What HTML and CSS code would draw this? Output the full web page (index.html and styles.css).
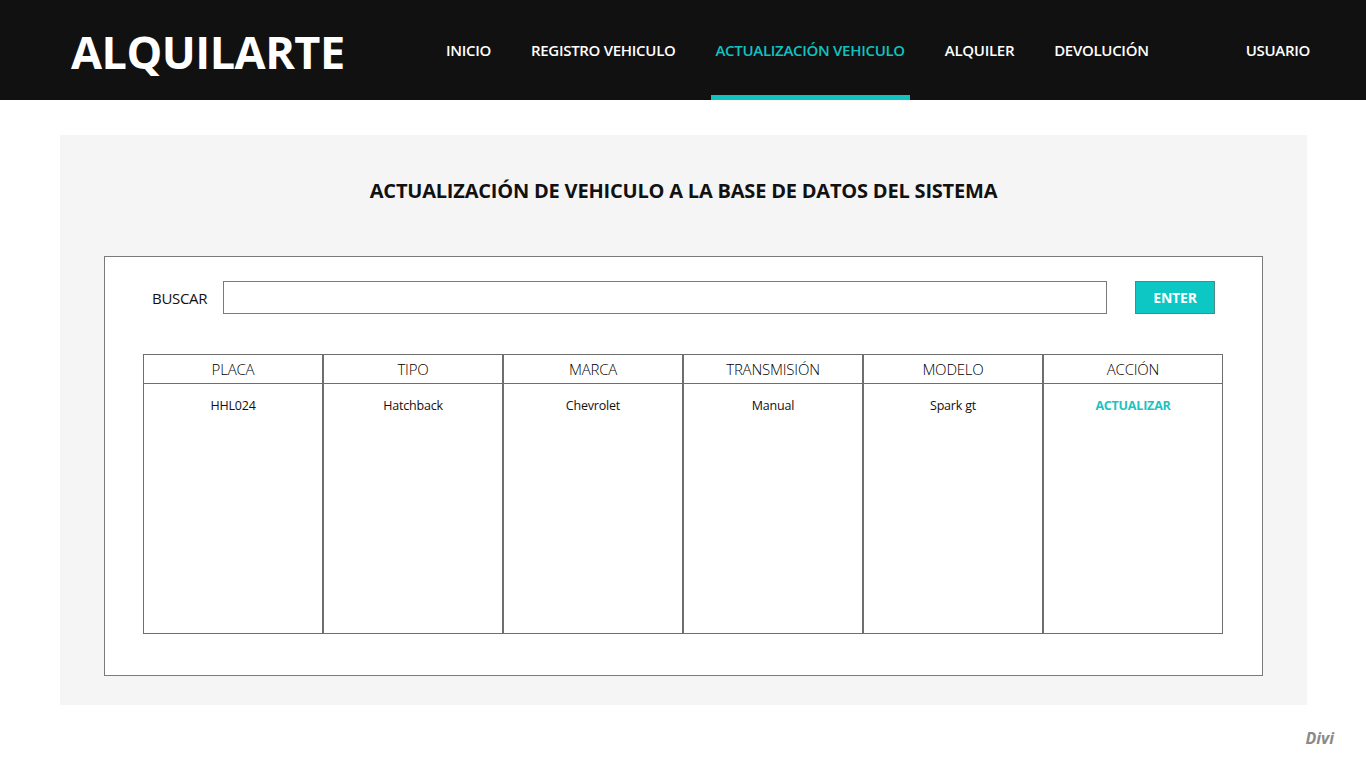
FILE: index.html
```html
<!DOCTYPE html>
<html lang="es">
<head>
<meta charset="utf-8">
<title>Alquilarte</title>
<link rel="stylesheet" href="styles.css">
</head>
<body>
<header class="topbar">
  <div class="logo">ALQUILARTE</div>
  <nav class="nav">
    <a class="nav-item">INICIO</a>
    <a class="nav-item">REGISTRO VEHICULO</a>
    <a class="nav-item active">ACTUALIZACIÓN VEHICULO</a>
    <a class="nav-item">ALQUILER</a>
    <a class="nav-item">DEVOLUCIÓN</a>
    <a class="nav-item user">USUARIO</a>
  </nav>
</header>
<main class="panel">
  <h1 class="title">ACTUALIZACIÓN DE VEHICULO A LA BASE DE DATOS DEL SISTEMA</h1>
  <section class="box">
    <div class="search">
      <label class="search-label">BUSCAR</label>
      <input class="search-input" type="text">
      <button class="btn">ENTER</button>
    </div>
    <div class="table">
      <div class="col"><div class="th">PLACA</div><div class="td">HHL024</div></div>
      <div class="col"><div class="th">TIPO</div><div class="td">Hatchback</div></div>
      <div class="col"><div class="th">MARCA</div><div class="td">Chevrolet</div></div>
      <div class="col"><div class="th">TRANSMISIÓN</div><div class="td">Manual</div></div>
      <div class="col"><div class="th">MODELO</div><div class="td">Spark gt</div></div>
      <div class="col"><div class="th">ACCIÓN</div><div class="td link">ACTUALIZAR</div></div>
    </div>
  </section>
</main>
<div class="divi">Divi</div>
</body>
</html>
```
FILE: styles.css
```css
* { box-sizing: border-box; }
html, body { margin: 0; padding: 0; }
body {
  font-family: "Open Sans", "Noto Sans", sans-serif;
  background: #fff;
  color: #111;
  width: 1366px;
  height: 768px;
  overflow: hidden;
  position: relative;
}
.topbar {
  height: 100px;
  background: #111111;
  display: flex;
  align-items: stretch;
  padding-left: 71px;
}
.logo {
  color: #fff;
  font-weight: 700;
  font-size: 45px;
  letter-spacing: -0.5px;
  display: flex;
  align-items: center;
  padding-top: 2px;
  width: 370px;
}
.nav {
  flex: 1;
  display: flex;
  align-items: stretch;
  padding-right: 51px;
}
.nav-item {
  color: #fff;
  font-weight: 600;
  font-size: 15px;
  letter-spacing: -0.3px;
  padding: 0 5px;
  margin-right: 30px;
  display: flex;
  align-items: center;
  border-bottom: 5px solid transparent;
  padding-top: 5px;
  cursor: pointer;
}
.nav-item.active {
  color: #10c3c0;
  border-bottom-color: #10c3c0;
}
.nav-item.user { margin-left: auto; margin-right: 0; }
.panel {
  margin: 35px 59px 0 60px;
  height: 570px;
  background: #f5f5f5;
  padding: 44px 44px 0;
}
.title {
  margin: 0;
  text-align: center;
  font-size: 20px;
  font-weight: 700;
  letter-spacing: -0.2px;
  color: #111;
  line-height: 24px;
}
.box {
  margin-top: 53px;
  height: 420px;
  background: #fff;
  border: 1px solid #7a7a7a;
  padding: 24px 38px 0;
}
.search {
  display: flex;
  align-items: center;
  height: 33px;
}
.search-label {
  font-size: 15px;
  color: #111;
  margin-left: 9px;
  width: 71px;
  letter-spacing: -0.3px;
}
.search-input {
  width: 884px;
  height: 33px;
  border: 1px solid #7a7a7a;
  background: #fff;
  outline: none;
  margin: 0;
}
.btn {
  margin-left: 28px;
  width: 80px;
  height: 33px;
  background: #0cc7c4;
  border: 1px solid #4e8a88;
  color: #fff;
  font-family: inherit;
  font-weight: 700;
  font-size: 14px;
  padding: 0;
  letter-spacing: -0.2px;
}
.table {
  margin-top: 40px;
  display: grid;
  grid-template-columns: repeat(6, 180px);
  height: 280px;
}
.col {
  border: 1px solid #6e6e6e;
  display: flex;
  flex-direction: column;
}
.th {
  height: 29px;
  border-bottom: 1px solid #6e6e6e;
  text-align: center;
  font-size: 15px;
  font-weight: 300;
  color: #000;
  line-height: 28px;
  letter-spacing: -0.2px;
}
.td {
  text-align: center;
  font-size: 12.5px;
  color: #111;
  padding-top: 13px;
  line-height: 18px;
  letter-spacing: -0.2px;
}
.td.link {
  color: #1cc3bf;
  font-weight: 700;
}
.divi {
  position: absolute;
  right: 32px;
  bottom: 19px;
  font-size: 16px;
  font-weight: 700;
  font-style: italic;
  color: #8a8a8a;
}
```
